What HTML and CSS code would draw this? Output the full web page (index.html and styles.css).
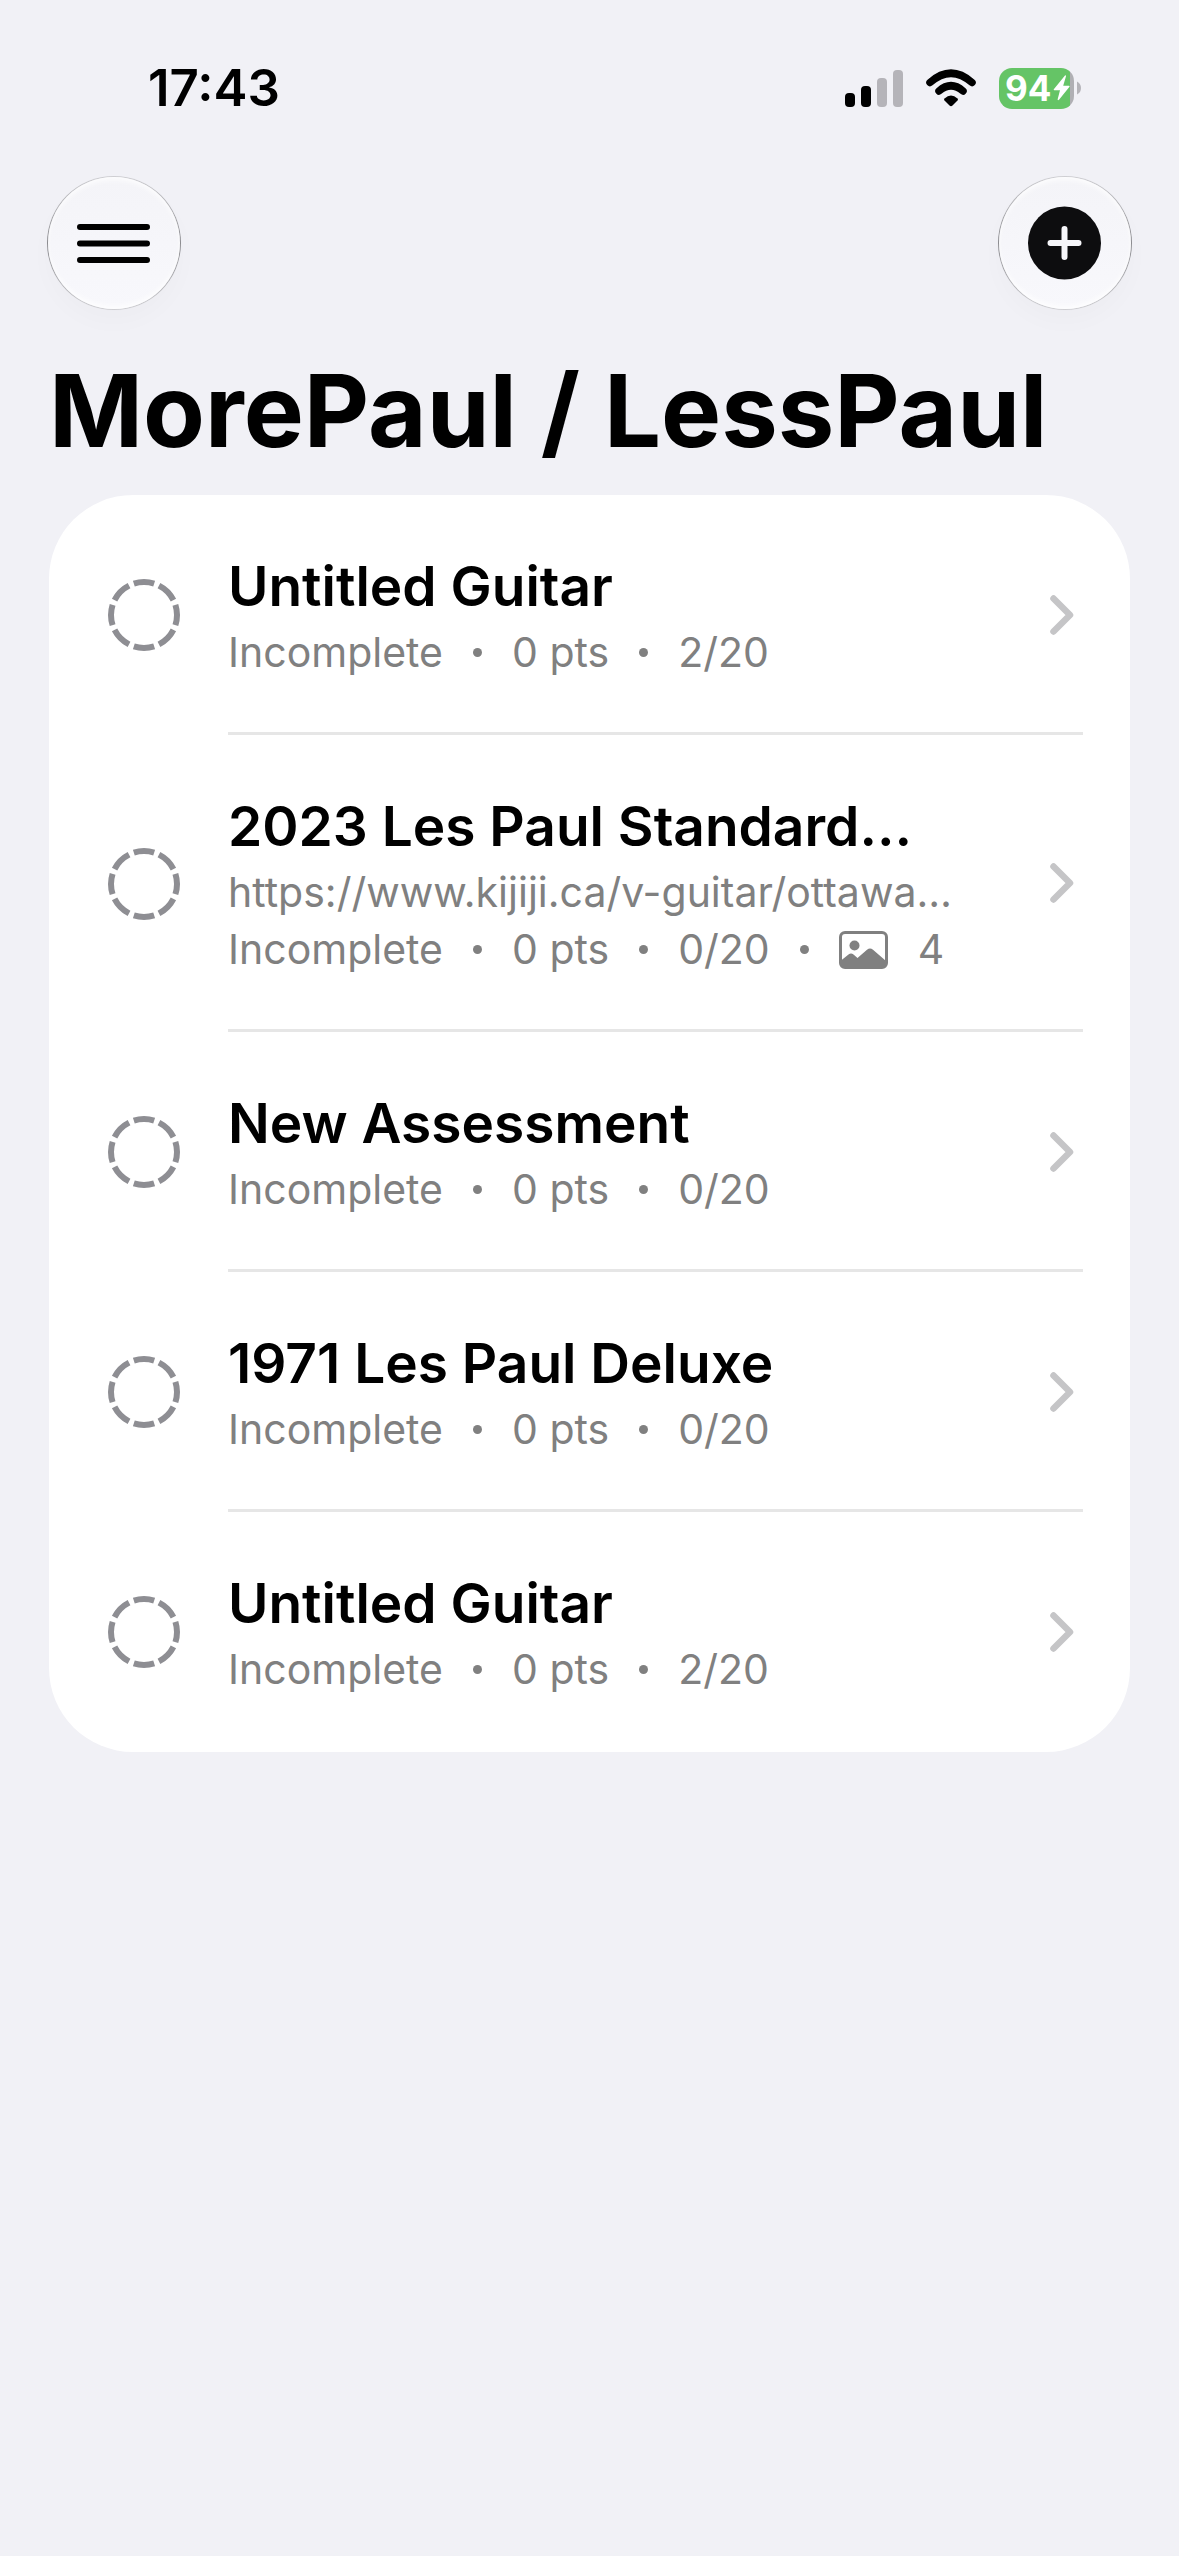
FILE: index.html
```html
<!DOCTYPE html>
<html lang="en">
<head>
    <meta charset="UTF-8">
    <meta name="viewport" content="width=device-width, initial-scale=1.0">
    <title>MorePaul / LessPaul</title>
    <link rel="stylesheet" href="styles.css">
</head>
<body>
    <!-- Shared icons -->
    <svg class="sprite" aria-hidden="true">
        <symbol id="icon-pending" viewBox="0 0 72 72">
            <circle cx="36" cy="36" r="33" pathLength="80" fill="none" stroke="#8e8e93" stroke-width="6" stroke-dasharray="8 2" stroke-dashoffset="4"/>
        </symbol>
        <symbol id="icon-chevron" viewBox="0 0 24 42">
            <path d="M3.500 3.500L20 20L3.500 36.500" fill="none" stroke="#c5c5c7" stroke-width="6.500" stroke-linecap="round" stroke-linejoin="round"/>
        </symbol>
    </svg>

    <div class="status-bar">
        <span class="time">17:43</span>
        <div class="status-icons">
            <svg class="signal" viewBox="0 0 58 38">
                <rect x="0" y="24" width="10" height="14" rx="4"/>
                <rect x="16" y="17" width="10" height="21" rx="4"/>
                <rect x="32" y="9" width="10" height="29" rx="4" fill="#b5b4b9"/>
                <rect x="48" y="1" width="10" height="37" rx="4" fill="#b5b4b9"/>
            </svg>
            <svg class="wifi" viewBox="0 0 50 38">
                <path d="M4 13.500Q25 -5 46 13.500M13 22Q25 11.500 37 22" fill="none" stroke="#000" stroke-width="7.500" stroke-linecap="round"/>
                <path d="M18.500 29.500Q25 23.500 31.500 29.500Q32.500 30.500 31.500 31.500L26.500 36.500Q25 38 23.500 36.500L18.500 31.500Q17.500 30.500 18.500 29.500z"/>
            </svg>
            <div class="battery">
                <div class="battery-level">
                    <span>94</span>
                    <svg class="bolt" viewBox="0 0 17 26">
                        <path d="M12 0.500L0.800 14.200Q0.300 15.200 1.400 15.200H7L4.600 24.500Q4.800 25.800 6 24.800L16.500 11.700Q17 10.700 15.800 10.700H10.200L13 1.200Q13 0 12 0.500z" fill="#fff"/>
                    </svg>
                </div>
                <svg class="battery-cap" viewBox="0 0 4 14"><path d="M0 0.500Q4 2.500 4 7T0 13.500z" fill="#b5b4b9"/></svg>
            </div>
        </div>
    </div>

    <header class="toolbar">
        <button class="round-btn" type="button" aria-label="Menu">
            <svg viewBox="0 0 74 74">
                <path d="M3 21h67M3 37.500h67M3 54h67" fill="none" stroke="#000" stroke-width="6" stroke-linecap="round"/>
            </svg>
        </button>
        <button class="round-btn" type="button" aria-label="Add assessment">
            <svg viewBox="0 0 74 74">
                <circle cx="36.500" cy="37" r="36.500" fill="#0d0d0f"/>
                <path d="M36.500 23v28M22.500 37h28" fill="none" stroke="#f6f6fa" stroke-width="6" stroke-linecap="round"/>
            </svg>
        </button>
    </header>

    <main>
        <h1 class="title">MorePaul / LessPaul</h1>

        <ul class="list">
            <li>
                <a class="row" href="#">
                    <svg class="pending"><use href="#icon-pending"/></svg>
                    <div class="row-body">
                        <div class="row-text">
                            <h2>Untitled Guitar</h2>
                            <p class="meta"><span>Incomplete</span><i class="dot"></i><span>0 pts</span><i class="dot"></i><span>2/20</span></p>
                        </div>
                        <svg class="chevron"><use href="#icon-chevron"/></svg>
                    </div>
                </a>
            </li>
            <li>
                <a class="row" href="#">
                    <svg class="pending"><use href="#icon-pending"/></svg>
                    <div class="row-body">
                        <div class="row-text">
                            <h2>2023 Les Paul Standard…</h2>
                            <p class="url">https://www.kijiji.ca/v-guitar/ottawa…</p>
                            <p class="meta">
                                <span>Incomplete</span><i class="dot"></i><span>0 pts</span><i class="dot"></i><span>0/20</span><i class="dot"></i>
                                <svg class="photo" viewBox="0 0 49 38">
                                    <rect x="1.500" y="1.500" width="46" height="35" rx="4.500" fill="none" stroke="#808080" stroke-width="3"/>
                                    <circle cx="15.500" cy="14.500" r="5"/>
                                    <path d="M2 29.500L9.500 23.500Q12 21.500 14.500 23.500L18.500 27L28 18.700Q31 16.500 34 18.700L47 30V33Q47 37 43 37H6Q2 37 2 33z"/>
                                </svg>
                                <span>4</span>
                            </p>
                        </div>
                        <svg class="chevron"><use href="#icon-chevron"/></svg>
                    </div>
                </a>
            </li>
            <li>
                <a class="row" href="#">
                    <svg class="pending"><use href="#icon-pending"/></svg>
                    <div class="row-body">
                        <div class="row-text">
                            <h2>New Assessment</h2>
                            <p class="meta"><span>Incomplete</span><i class="dot"></i><span>0 pts</span><i class="dot"></i><span>0/20</span></p>
                        </div>
                        <svg class="chevron"><use href="#icon-chevron"/></svg>
                    </div>
                </a>
            </li>
            <li>
                <a class="row" href="#">
                    <svg class="pending"><use href="#icon-pending"/></svg>
                    <div class="row-body">
                        <div class="row-text">
                            <h2>1971 Les Paul Deluxe</h2>
                            <p class="meta"><span>Incomplete</span><i class="dot"></i><span>0 pts</span><i class="dot"></i><span>0/20</span></p>
                        </div>
                        <svg class="chevron"><use href="#icon-chevron"/></svg>
                    </div>
                </a>
            </li>
            <li>
                <a class="row" href="#">
                    <svg class="pending"><use href="#icon-pending"/></svg>
                    <div class="row-body">
                        <div class="row-text">
                            <h2>Untitled Guitar</h2>
                            <p class="meta"><span>Incomplete</span><i class="dot"></i><span>0 pts</span><i class="dot"></i><span>2/20</span></p>
                        </div>
                        <svg class="chevron"><use href="#icon-chevron"/></svg>
                    </div>
                </a>
            </li>
        </ul>
    </main>
</body>
</html>
```
FILE: styles.css
```css
* {
    margin: 0;
    padding: 0;
    box-sizing: border-box;
}

body {
    font-family: Inter, 'Liberation Sans', sans-serif;
    background: #f1f1f6;
    color: #000;
    min-height: 100vh;
}

svg {
    display: block;
    flex-shrink: 0;
}

.sprite {
    position: absolute;
    width: 0;
    height: 0;
}

/* Status bar */
.status-bar {
    display: flex;
    justify-content: space-between;
    align-items: center;
    height: 176px;
    padding: 0 98px 0 148px;
}

.time {
    font-size: 51px;
    font-weight: 600;
    line-height: 60px;
}

.status-icons {
    display: flex;
    align-items: center;
    gap: 23px;
}

.signal {
    width: 58px;
    height: 38px;
}

.wifi {
    width: 50px;
    height: 38px;
}

.battery {
    display: flex;
    align-items: center;
    gap: 3px;
}

.battery-level {
    display: flex;
    align-items: center;
    gap: 2px;
    width: 75px;
    height: 41px;
    padding-left: 6px;
    border-radius: 13px;
    background: linear-gradient(to right, #65c466 71px, #b0b0b4 71px);
    color: #fff;
    font-size: 35px;
    font-weight: 700;
}

.bolt {
    width: 17px;
    height: 26px;
}

.battery-cap {
    width: 4px;
    height: 14px;
}

/* Toolbar */
.toolbar {
    display: flex;
    justify-content: space-between;
    padding: 0 47px;
}

.round-btn {
    display: flex;
    align-items: center;
    justify-content: center;
    width: 134px;
    height: 134px;
    border: 1px solid transparent;
    border-radius: 50%;
    background:
        linear-gradient(#f4f4f8, #f8f8fc) padding-box,
        linear-gradient(to bottom, #cfcfd3, #8a8a8e 50%, #cfcfd3) border-box;
    box-shadow: inset 0 4px 6px -2px #fff, inset 0 -4px 6px -2px #fff, 0 12px 24px rgba(0, 0, 0, 0.02);
    cursor: pointer;
}

.round-btn svg {
    width: 74px;
    height: 74px;
}

/* Content */
main {
    padding: 38px 49px;
}

.title {
    font-size: 101px;
    font-weight: 700;
    line-height: 125px;
    margin-bottom: 22px;
}

.list {
    list-style: none;
    background: #fff;
    border-radius: 84px;
    overflow: hidden;
}

.row {
    display: flex;
    align-items: center;
    gap: 48px;
    padding-left: 59px;
    padding-right: 47px;
    color: inherit;
    text-decoration: none;
}

.pending {
    width: 72px;
    height: 72px;
}

.row-body {
    flex: 1;
    min-width: 0;
    display: flex;
    align-items: center;
    justify-content: space-between;
    padding: 55px 9px 51px 0;
    border-bottom: 3px solid #e6e6e6;
}

.list li:last-child .row-body {
    border-bottom-color: transparent;
}

.row-text {
    min-width: 0;
    white-space: nowrap;
}

.row-text h2 {
    font-size: 55px;
    font-weight: 600;
    line-height: 73px;
    margin-bottom: 1px;
}

.url,
.meta {
    font-size: 41px;
    line-height: 57px;
    color: #808080;
}

.meta {
    display: flex;
    align-items: center;
    gap: 30px;
}

.dot {
    width: 9px;
    height: 9px;
    border-radius: 50%;
    background: #808080;
}

.photo {
    width: 49px;
    height: 38px;
    fill: #808080;
}

.chevron {
    width: 24px;
    height: 42px;
}
```
